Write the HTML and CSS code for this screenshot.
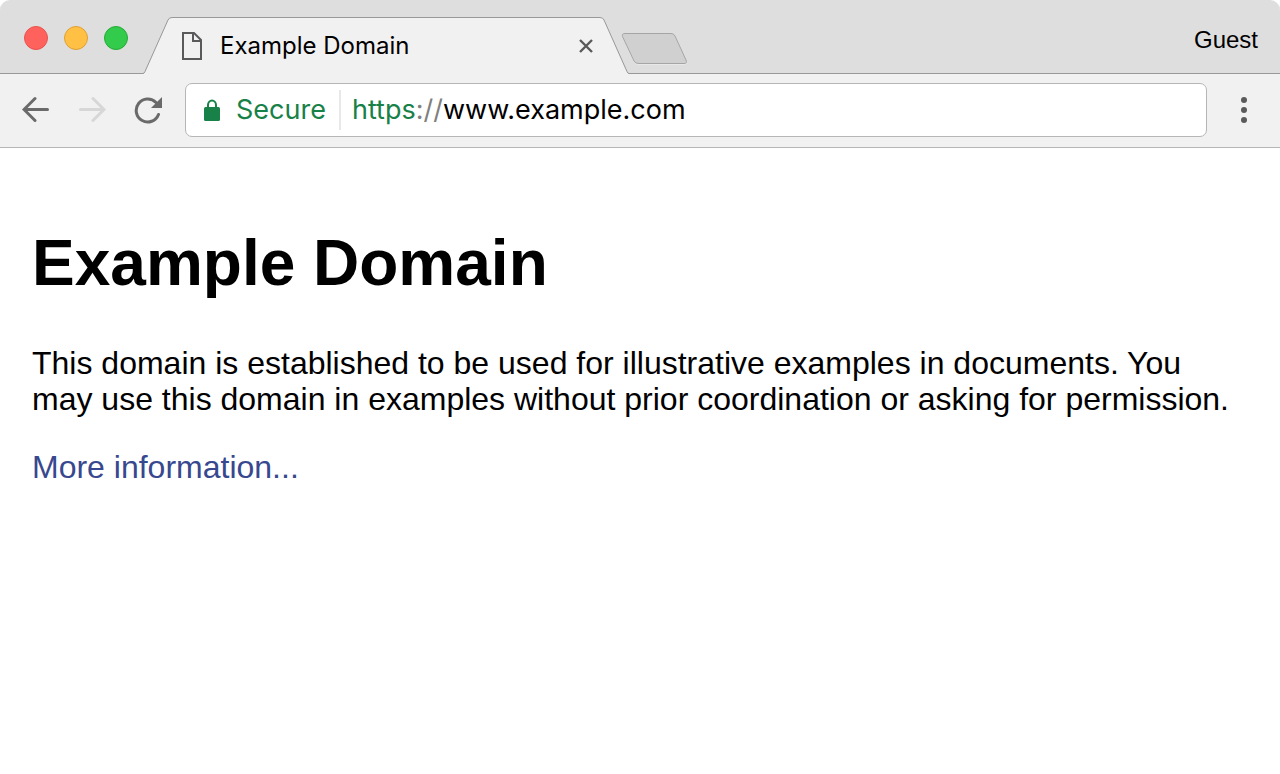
FILE: index.html
```html
<!DOCTYPE html>
<html lang="en">
<head>
<meta charset="utf-8">
<title>Example Domain</title>
<link rel="stylesheet" href="styles.css">
</head>
<body>
<div class="window">
  <header class="tab-strip">
    <div class="window-controls">
      <button class="control control-close" aria-label="Close window"></button>
      <button class="control control-minimize" aria-label="Minimize window"></button>
      <button class="control control-zoom" aria-label="Zoom window"></button>
    </div>
    <div class="tab">
      <svg class="tab-edge" viewBox="0 0 29 57" aria-hidden="true">
        <path d="M0 57L1 56Q2 55.500 2.500 54.500L25 3Q26 .5 29 .5V57Z" fill="#f1f1f1"/>
        <path d="M0 56.500Q1.200 56.500 2 54.500L25 3Q26 .5 29 .5" fill="none" stroke="#999"/>
      </svg>
      <div class="tab-body">
        <svg class="page-icon" viewBox="0 0 20 28" aria-hidden="true">
          <path d="M1 1H12L19 8V27H1ZM11 1V9H19" fill="none" stroke="#5a5a5c" stroke-width="2"/>
        </svg>
        <span class="tab-title">Example Domain</span>
        <button class="tab-close" aria-label="Close tab">
          <svg width="14" height="14" viewBox="0 0 14 14"><path d="M1 1L13 13M13 1L1 13" stroke="#5a5a5a" stroke-width="2.400"/></svg>
        </button>
      </div>
      <svg class="tab-edge" viewBox="0 0 29 57" aria-hidden="true">
        <path d="M29 57L28 56Q27 55.500 26.500 54.500L4 3Q3 .5 0 .5V57Z" fill="#f1f1f1"/>
        <path d="M29 56.500Q27.800 56.500 27 54.500L4 3Q3 .5 0 .5" fill="none" stroke="#999"/>
      </svg>
    </div>
    <button class="new-tab" aria-label="New tab">
      <svg width="68" height="34" viewBox="0 0 68 34">
        <path d="M4 2H50Q53 2 54 4L65 29Q66 32.500 63 32.500H18Q14 32.500 13 30L2 5Q1 2 4 2Z" fill="none" stroke="#e8e8e8"/>
        <path d="M4 1.500H50Q53 1.500 54 4L65 28Q66.500 31.500 63 31.500H18Q14 31.500 13 29L1.500 4.500Q.5 1.500 4 1.500Z" fill="#d0d0d0" stroke="#a5a5a5"/>
      </svg>
    </button>
    <button class="profile">Guest</button>
  </header>
  <nav class="toolbar" aria-label="Navigation">
    <button class="nav-button" aria-label="Back">
      <svg width="28" height="28" viewBox="0 0 28 28"><path d="M25.500 13.500H3M13 2.500L2 13.500L13 24.500" fill="none" stroke="#6a6a6a" stroke-width="3" stroke-linecap="round"/></svg>
    </button>
    <button class="nav-button" aria-label="Forward" disabled>
      <svg width="28" height="28" viewBox="0 0 28 28"><path d="M2.500 13.500H25M15 2.500L26 13.500L15 24.500" fill="none" stroke="#d7d7d7" stroke-width="3" stroke-linecap="round"/></svg>
    </button>
    <button class="nav-button" aria-label="Reload">
      <svg width="28" height="28" viewBox="0 0 28 28"><path d="M24.500 18.500A11.500 11.500 0 1 1 22 6.500" fill="none" stroke="#6a6a6a" stroke-width="3" stroke-linecap="round"/><path d="M28 1V12H17Z" fill="#6a6a6a"/></svg>
    </button>
    <form class="address-bar">
      <svg class="lock" viewBox="0 0 16 22" aria-hidden="true"><path d="M4 9V6A4 4.500 0 0 1 12 6V9" fill="none" stroke="#188147" stroke-width="2"/><rect y="8" width="16" height="14" rx="1.500" fill="#188147"/></svg>
      <span class="secure">Secure</span>
      <label class="scheme" for="url"><span class="scheme-secure">https</span>://</label>
      <input class="url" id="url" type="text" value="www.example.com" spellcheck="false">
    </form>
    <button class="menu" aria-label="Menu">
      <svg width="6" height="26" viewBox="0 0 6 26" fill="#5a5a5a"><circle cx="3" cy="3" r="3"/><circle cx="3" cy="13" r="3"/><circle cx="3" cy="23" r="3"/></svg>
    </button>
  </nav>
  <main class="page">
    <h1 class="page-heading">Example Domain</h1>
    <p class="page-text">This domain is established to be used for illustrative examples in documents. You may use this domain in examples without prior coordination or asking for permission.</p>
    <p class="page-text"><a class="page-link" href="#more">More information...</a></p>
  </main>
</div>
</body>
</html>
```
FILE: styles.css
```css
* {
  box-sizing: border-box;
}

body {
  margin: 0;
  background: #fff;
  color: #000;
  font-family: Inter, "Liberation Sans", sans-serif;
}

button,
input {
  padding: 0;
  border: 0;
  background: none;
  color: inherit;
  font: inherit;
}

svg {
  display: block;
  flex: none;
}

.tab-strip {
  display: flex;
  align-items: flex-end;
  height: 74px;
  background: #dedede;
  box-shadow: inset 0 -1px #999;
  border-radius: 10px 10px 0 0;
}

.window-controls {
  display: flex;
  flex: none;
  gap: 16px;
  align-self: flex-start;
  padding: 26px 15px 0 24px;
}

.control {
  width: 24px;
  height: 24px;
  border: 1px solid;
  border-radius: 50%;
}

.control-close {
  background: #ff625c;
  border-color: #e9524d;
}

.control-minimize {
  background: #ffc043;
  border-color: #dfa035;
}

.control-zoom {
  background: #33cb4b;
  border-color: #24ab35;
}

.tab {
  display: flex;
  flex: 0 1 486px;
  min-width: 0;
}

.tab-edge {
  width: 29px;
  height: 57px;
}

.tab-body {
  display: flex;
  flex: 1;
  align-items: center;
  min-width: 0;
  padding: 0 7px 0 10px;
  border-top: 1px solid #999;
  background: #f1f1f1;
}

.page-icon {
  width: 20px;
  height: 28px;
}

.tab-title {
  flex: 1;
  min-width: 0;
  margin-left: 18px;
  overflow: hidden;
  font-size: 24px;
  line-height: 32px;
  white-space: nowrap;
}

.new-tab {
  align-self: flex-start;
  margin: 32px 0 0 -8px;
}

.profile {
  align-self: flex-start;
  margin: 24px 22px 0 auto;
  font-family: "Liberation Sans", sans-serif;
  font-size: 24px;
  line-height: 32px;
}

.toolbar {
  display: flex;
  align-items: center;
  height: 74px;
  padding: 0 33px 1px 22px;
  border-bottom: 1px solid #b6b6b6;
  background: #f1f1f1;
}

.nav-button {
  margin-right: 28px;
}

.address-bar {
  display: flex;
  flex: 1;
  align-items: center;
  min-width: 0;
  height: 54px;
  margin: 0 34px 0 -5px;
  padding-left: 18px;
  border: 1px solid #b6b6b6;
  border-radius: 7px;
  background: #fff;
  font-size: 27px;
  line-height: 40px;
}

.lock {
  width: 16px;
  height: 22px;
}

.secure {
  margin: 0 11px 0 16px;
  padding-right: 13px;
  border-right: 2px solid #e8e8e8;
  color: #188147;
}

.scheme {
  color: #808080;
}

.scheme-secure {
  color: #188147;
}

.url {
  flex: 1;
  min-width: 0;
  height: 40px;
  outline: 0;
}

.page {
  padding: 79px 32px 32px;
  font-family: "Liberation Sans", sans-serif;
}

.page-heading {
  margin: 0 0 46px;
  font-size: 64px;
  line-height: 72px;
}

.page-text {
  margin: 0 0 32px;
  font-size: 32px;
  line-height: 36px;
}

.page-link {
  color: #38488f;
  text-decoration: none;
}
```
